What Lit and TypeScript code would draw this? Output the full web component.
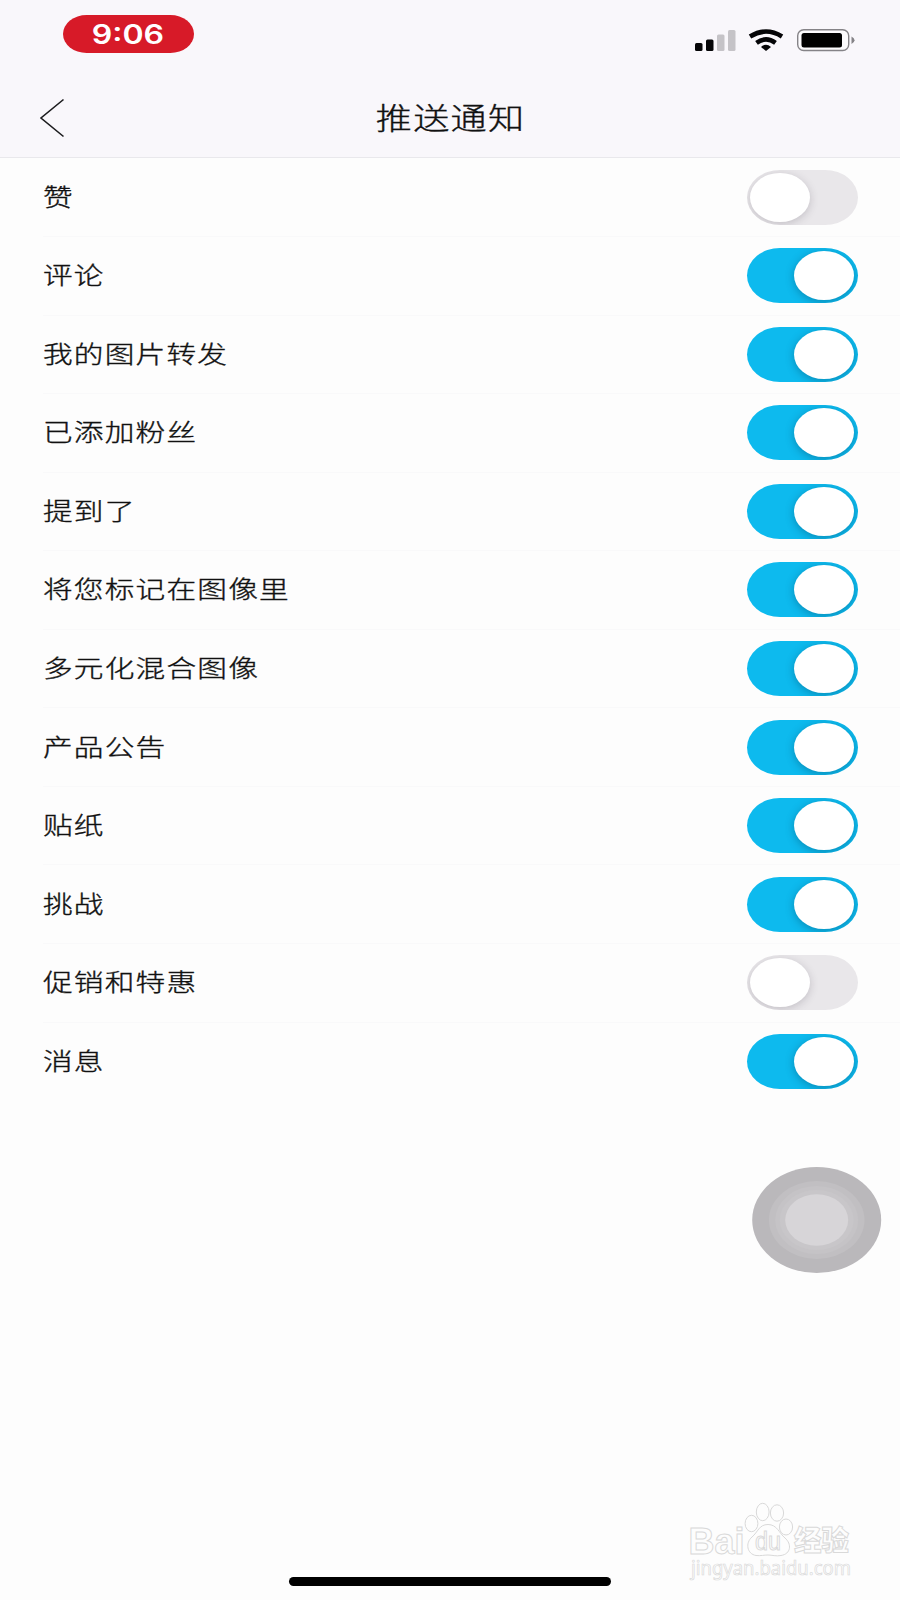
import { LitElement, html, css } from "lit";
import { customElement, property } from "lit/decorators.js";
import { classMap } from "lit/directives/class-map.js";

@customElement("toggle-switch")
class ToggleSwitch extends LitElement {
  @property({ type: Boolean }) on = false;

  static styles = css`
    :host { display: block; }
    .track {
      box-sizing: border-box;
      display: flex;
      width: 111px;
      height: 55px;
      padding: 3px;
      border-radius: 33px / 27.5px;
      background: #e9e7ea;
      overflow: hidden;
    }
    .knob {
      width: 60px;
      height: 49px;
      border-radius: 50%;
      background: #fff;
      box-shadow: 0 2px 9px rgba(60, 50, 70, 0.22);
    }
    .on { justify-content: flex-end; padding-right: 4px; background: #0dbaee; }
    .on .knob { box-shadow: 0 2px 8px rgba(0, 60, 90, 0.38); }
  `;

  render() {
    return html`<div class=${classMap({ track: true, on: this.on })}><div class="knob"></div></div>`;
  }
}

@customElement("app-root")
class AppRoot extends LitElement {
  private items: [string, boolean][] = [
    ["赞", false],
    ["评论", true],
    ["我的图片转发", true],
    ["已添加粉丝", true],
    ["提到了", true],
    ["将您标记在图像里", true],
    ["多元化混合图像", true],
    ["产品公告", true],
    ["贴纸", true],
    ["挑战", true],
    ["促销和特惠", false],
    ["消息", true],
  ];

  static styles = css`
    :host {
      display: block;
      position: relative;
      width: 900px;
      height: 1600px;
      overflow: hidden;
      background: #fdfdfd;
      color: #111;
      font-family: "Noto Sans CJK SC", sans-serif;
    }
    .screen { display: flex; flex-direction: column; height: 100%; }
    .header {
      box-sizing: border-box;
      height: 158.4px;
      background: #f9f7fb;
      border-bottom: 1px solid #e9e8ec;
    }
    .status {
      display: flex;
      justify-content: space-between;
      align-items: flex-start;
      height: 78px;
      padding: 14.5px 42px 0 62.5px;
      box-sizing: border-box;
    }
    .clock {
      display: flex;
      align-items: center;
      justify-content: center;
      width: 131.5px;
      height: 38.5px;
      border-radius: 24px / 19.25px;
      background: #d71a28;
      color: #fff;
      font: 600 26.5px/38px Inter, sans-serif;
    }
    .clock span { transform: scaleX(1.21); }
    .signals { margin-top: 11.5px; display: block; }
    .nav {
      display: grid;
      grid-template-columns: 100px 1fr 100px;
      align-items: center;
      height: 79px;
    }
    .back { margin-left: 39px; display: block; }
    .title {
      margin: 0;
      padding-bottom: 4px;
      text-align: center;
      font-size: 29.5px;
      font-weight: 300;
      line-height: 44px;
      letter-spacing: 1px;
      text-indent: 1px;
      -webkit-text-stroke: 0.35px #111;
      transform: scaleX(1.225);
    }
    .list { padding: 0 0 0 43px; }
    .row {
      box-sizing: border-box;
      display: flex;
      align-items: center;
      justify-content: space-between;
      height: 78.57px;
      padding-right: 42px;
      border-bottom: 1px solid #f9f9fa;
    }
    .row:last-child { border-bottom-color: transparent; }
    .label {
      padding-bottom: 3px;
      font-size: 24px;
      font-weight: 300;
      line-height: 36px;
      letter-spacing: 1px;
      white-space: nowrap;
      -webkit-text-stroke: 0.35px #111;
      transform: scaleX(1.235);
      transform-origin: left;
    }
    .home {
      width: 322px;
      height: 9px;
      margin: auto auto 14px;
      border-radius: 5px;
      background: #000;
    }
    .assist { position: absolute; left: 752px; top: 1166px; }
    .mark { position: absolute; left: 670px; top: 1480px; }
    .outline { fill: #fdfdfd; stroke: #d9d9d9; stroke-width: 1; }
    .brand { font: 700 37px "Liberation Sans", sans-serif; }
    .du { font: 400 25px "Liberation Sans", sans-serif; }
    .exp { font: 900 28px "Noto Sans CJK SC", sans-serif; }
    .site { font: 400 20px "Noto Sans", sans-serif; stroke-width: 0.7; }
  `;

  render() {
    return html`
      <div class="screen">
        <header class="header">
          <div class="status">
            <div class="clock"><span>9:06</span></div>
            <svg class="signals" width="164" height="30" viewBox="0 0 164 30">
              <g transform="translate(-694 -26)">
                <rect x="695" y="43" width="7.5" height="8" rx="1.5" fill="#050507" />
                <rect x="706" y="39.5" width="7.5" height="11.5" rx="1.5" fill="#050507" />
                <rect x="717" y="34.5" width="7.5" height="16.5" rx="1.5" fill="#c5c3c7" />
                <rect x="728" y="30" width="7.5" height="21" rx="1.5" fill="#c5c3c7" />
                <g fill="none" stroke="#050507" stroke-width="4.6">
                  <path d="M750 36.5Q766 26.5 782 36.5" />
                  <path d="M756.5 42.8Q766 36 775.5 42.8" />
                </g>
                <path d="M761 47Q766 42.500 771 47L766 51Z" fill="#050507" />
                <rect x="797.7" y="29.7" width="51" height="20.8" rx="6" fill="#fcfbfd" stroke="#858387" stroke-width="1.4" />
                <rect x="801.5" y="33" width="40.5" height="14.5" rx="2.5" fill="#000" />
                <path d="M851.5 36.5Q854.5 38 854.5 40.2T851.5 44Z" fill="#858387" />
              </g>
            </svg>
          </div>
          <div class="nav">
            <svg class="back" width="28" height="42" viewBox="0 0 28 42">
              <path d="M24.5 2.5L2 21L24.5 39.5" fill="none" stroke="#1c1c1e" stroke-width="1.6" />
            </svg>
            <h1 class="title">推送通知</h1>
          </div>
        </header>
        <main class="list">
          ${this.items.map(
            ([name, on]) => html`<div class="row"><span class="label">${name}</span><toggle-switch .on=${on}></toggle-switch></div>`
          )}
        </main>
        <div class="home"></div>
      </div>
      <svg class="assist" width="130" height="108" viewBox="0 0 130 108">
        <ellipse cx="64.7" cy="54" rx="64.5" ry="53" fill="#bab8bb" />
        <ellipse cx="64.7" cy="54" rx="47.8" ry="39" fill="#c1bfc2" />
        <ellipse cx="64.7" cy="54" rx="41.5" ry="34" fill="#c5c3c6" />
        <ellipse cx="64.7" cy="54" rx="37" ry="30" fill="#c8c6c9" />
        <ellipse cx="64.7" cy="54" rx="31.5" ry="25.7" fill="#d7d5d8" />
      </svg>
      <svg class="mark" width="200" height="120" viewBox="0 0 200 120">
        <text class="outline brand" x="18.500" y="73.500" textLength="56" lengthAdjust="spacingAndGlyphs">Bai</text>
        <g class="outline">
          <ellipse cx="81.5" cy="43.5" rx="6.4" ry="8.2" />
          <ellipse cx="92.7" cy="32" rx="6.4" ry="8.7" />
          <ellipse cx="107" cy="33" rx="6.6" ry="8.2" />
          <ellipse cx="116" cy="47" rx="6.6" ry="8" />
          <path d="M98 44.5C89 44.5 88 52 82 57C75 63 77 74 86 75.500C91 76 94 75 98 75C102 75 106 76.500 111 75.500C121 74 122 64 115 58C109 53 107 44.5 98 44.5Z" />
        </g>
        <text class="outline du" x="85" y="69.500" textLength="26" lengthAdjust="spacingAndGlyphs">du</text>
        <text class="outline exp" x="124" y="71" textLength="55" lengthAdjust="spacingAndGlyphs">经验</text>
        <text class="outline site" x="21" y="95" textLength="160" lengthAdjust="spacingAndGlyphs">jingyan.baidu.com</text>
      </svg>
    `;
  }
}
